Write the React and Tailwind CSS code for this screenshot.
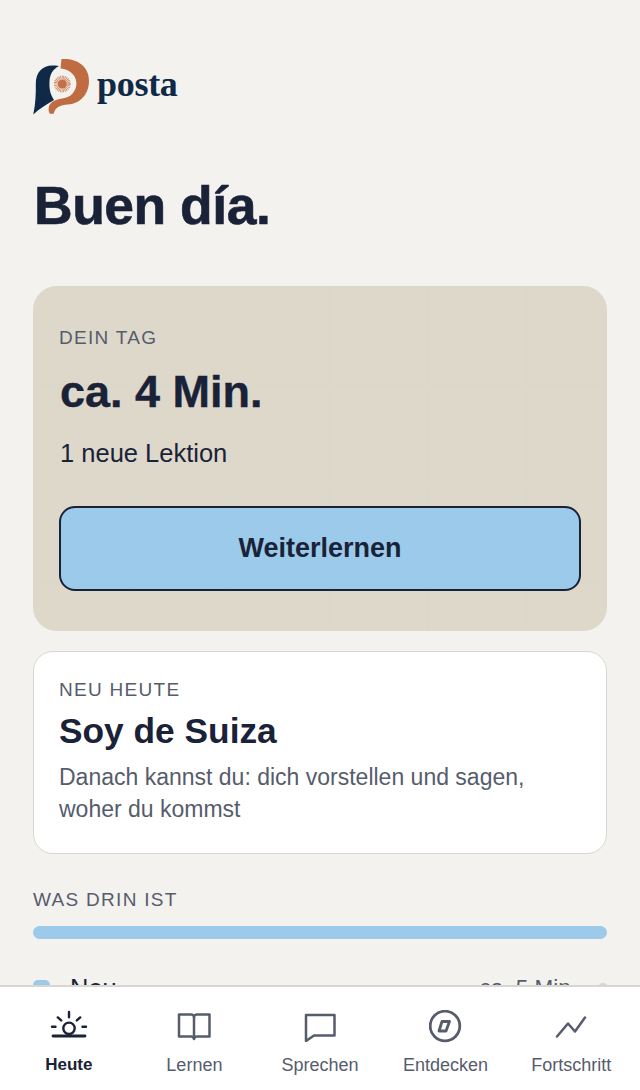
function Logo() {
  return (
    <div className="flex items-center h-[57px]">
      <svg width="58" height="58" viewBox="0 0 58 58" className="shrink-0">
        <path d="M0.300 56.500 C2.500 46 3 36 2.800 26 C2.600 14 10 7.500 19 7.500 C21 7.500 23.500 7.600 26 8 C20 11 17 16 16.500 23 C16 31 17.500 37 21 42 C13 46.500 6 51 0.300 56.500 Z" fill="#0f2a47" />
        <path d="M28.500 1 C44 0 56 8 56 23 C56 37 46 46 35 46.500 C27 47 22 49.500 20.500 56 L16.500 55.500 C14 49 17 44 23 42 C30 40 36 40 40 35 C44 30 44.500 24 41.500 18.500 C38.500 13.500 33.500 11 27.500 10.500 Z" fill="#bf6c43" />
        <circle cx="29.300" cy="26" r="6.500" fill="none" stroke="#c97b52" strokeWidth="3.800" strokeDasharray="0.700 0.700" />
        <circle cx="29.300" cy="26" r="4.600" fill="#c4714a" />
      </svg>
      <span className="ml-[6px] mb-[5px] text-[36px] font-bold tracking-[-0.3px] text-[#0f2a47] [font-family:'Liberation_Serif',serif]">posta</span>
    </div>
  );
}

const strokeCls = "fill-none stroke-current";

function Sun() {
  return (
    <svg width="38" height="34" viewBox="0 0 38 34" className={strokeCls} strokeWidth="2.400" strokeLinecap="round">
      <path d="M19 2v5.300M7.800 7.400l3.400 3M30.200 7.400l-3.400 3M2 16.700h3.500M32.500 16.700h3.500" />
      <circle cx="19" cy="18.300" r="5.700" />
      <path d="M3 26h32" strokeWidth="2.800" />
    </svg>
  );
}
function Book() {
  return (
    <svg width="34" height="30" viewBox="0 0 34 30" className={strokeCls} strokeWidth="2.500" strokeLinejoin="round">
      <path d="M17 5v22" />
      <path d="M2 2.500h12a3 3 0 0 1 3 2.500 3 3 0 0 1 3-2.500h12.500v22H20a3 3 0 0 0-3 2.500 3 3 0 0 0-3-2.500H2Z" />
    </svg>
  );
}
function Chat() {
  return (
    <svg width="34" height="30" viewBox="0 0 34 30" className={strokeCls} strokeWidth="2.500" strokeLinejoin="round">
      <path d="M3 3h28.500v20.500H11l-8 5.500Z" />
    </svg>
  );
}
function Compass() {
  return (
    <svg width="34" height="34" viewBox="0 0 34 34" className={strokeCls} strokeWidth="2.800" strokeLinejoin="round">
      <circle cx="16" cy="16" r="14.800" />
      <path d="M13 11.500h7.500l-3.500 9.500H10Z" />
    </svg>
  );
}
function Trend() {
  return (
    <svg width="32" height="24" viewBox="0 0 32 24" className={strokeCls} strokeWidth="2.500" strokeLinecap="round" strokeLinejoin="round">
      <path d="M2 21.500l11-13 7 8 10-14" />
    </svg>
  );
}

function NavItem({ icon, label, active }) {
  return (
    <div className={"flex flex-col items-center w-[126px] " + (active ? "text-[#1a2238]" : "text-[#565c6c]")}>
      <div className="h-[38px] flex items-center justify-center">{icon}</div>
      <span className={"mt-[7px] leading-[24px] whitespace-nowrap " + (active ? "text-[17px] font-semibold" : "text-[18px] font-normal")}>{label}</span>
    </div>
  );
}

export default function App() {
  return (
    <div className="h-[1090px] w-[640px] flex flex-col overflow-hidden bg-[#f4f2ee] text-[#1a2238] [font-family:'Liberation_Sans',Arial,sans-serif]">
      <main className="flex-1 min-h-0 overflow-hidden px-[33px] pt-[58px]">
        <Logo />
        <h1 className="mt-[61px] text-[53.500px] leading-[60px] font-bold tracking-[-0.5px] [-webkit-text-stroke:0.6px_#1a2238] pl-[1px]">Buen día.</h1>
        <section className="mt-[50px] h-[345px] rounded-[24px] bg-[#ded8cb] bg-[image:linear-gradient(90deg,#dad7cb_2px,transparent_2px),linear-gradient(180deg,#dad7cb_2px,transparent_2px)] bg-[size:99px_99px] bg-[position:97px_98px] px-[26px] pt-[40px]">
          <p className="text-[19px] leading-[24px] tracking-[1.3px] text-[#565c6c]">DEIN TAG</p>
          <p className="mt-[17px] text-[45px] leading-[50px] font-bold pl-[1px] [-webkit-text-stroke:0.4px_#1a2238]">ca. 4 Min.</p>
          <p className="mt-[20px] text-[25.500px] leading-[32px] pl-[1px]">1 neue Lektion</p>
          <button className="mt-[37px] w-full h-[85px] rounded-[16px] border-2 border-[#1a2238] bg-[#9bcaea] text-[27px] font-bold">Weiterlernen</button>
        </section>
        <section className="mt-[20px] h-[203px] rounded-[20px] border border-[#d8d6d0] bg-white px-[25px] pt-[26px]">
          <p className="text-[19px] leading-[24px] tracking-[1.3px] text-[#565c6c]">NEU HEUTE</p>
          <p className="mt-[8px] text-[35.300px] leading-[42px] font-bold">Soy de Suiza</p>
          <p className="mt-[9px] text-[23px] leading-[32px] text-[#565c6c]">Danach kannst du: dich vorstellen und sagen,<br />woher du kommst</p>
        </section>
        <p className="mt-[34px] text-[19px] leading-[24px] tracking-[1.300px] text-[#565c6c]">WAS DRIN IST</p>
        <div className="mt-[14px] h-[13px] rounded-full bg-[#9bcaea]" />
        <div className="mt-[33px] flex items-center leading-[32px]">
          <span className="w-[17px] h-[17px] rounded-[5px] bg-[#9bcaea]" />
          <span className="ml-[20px] text-[25.500px]">Neu</span>
          <span className="ml-auto text-[22.500px] text-[#565c6c]">ca. 5 Min.</span>
          <span className="ml-[21px] mr-[-1px] w-[10px] h-[10px] rounded-full bg-[#d8d6d0]" />
        </div>
      </main>
      <nav className="h-[105px] shrink-0 flex items-start justify-between pt-[21px] px-[6px] bg-white border-t-2 border-[#d8d6d0]">
        <NavItem icon={<Sun />} label="Heute" active />
        <NavItem icon={<Book />} label="Lernen" />
        <NavItem icon={<Chat />} label="Sprechen" />
        <NavItem icon={<Compass />} label="Entdecken" />
        <NavItem icon={<Trend />} label="Fortschritt" />
      </nav>
    </div>
  );
}
